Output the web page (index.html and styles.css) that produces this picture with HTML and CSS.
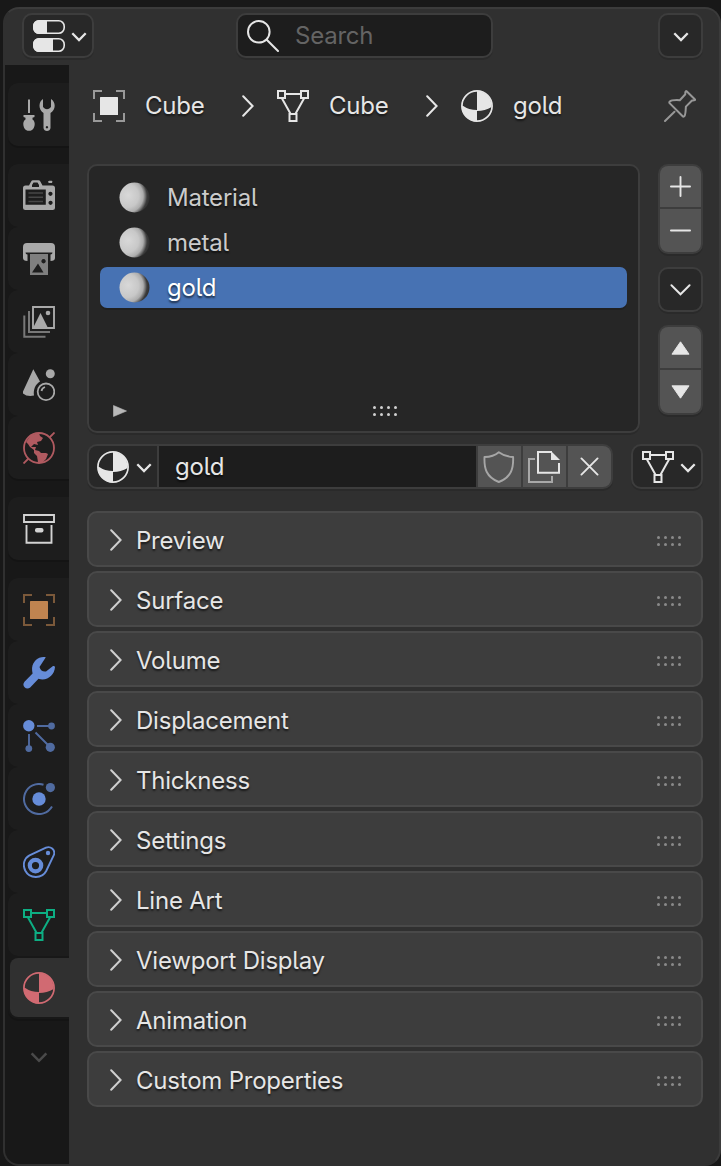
FILE: index.html
```
<!DOCTYPE html>
<html lang="en">
<head>
<meta charset="utf-8">
<title>Material Properties</title>
<link rel="stylesheet" href="styles.css">
</head>
<body>
<svg class="defs" width="0" height="0">
  <defs>
    <radialGradient id="ball-fill" cx=".2" cy=".46" fx=".3" fy=".42" r=".78">
      <stop offset="0" stop-color="#d8d8d8"/><stop offset=".5" stop-color="#c8c8c8"/><stop offset=".72" stop-color="#adadad"/><stop offset=".82" stop-color="#757575"/><stop offset=".91" stop-color="#3c3c3c"/><stop offset="1" stop-color="#323232"/>
    </radialGradient>
  </defs>
  <symbol id="properties" viewBox="0 0 32 32"><g fill="none" stroke="currentColor" stroke-width="1.6"><rect x=".8" y=".8" width="30.4" height="12.4" rx="5.500"/><rect x=".8" y="18.8" width="30.4" height="12.4" rx="5.500"/></g><path fill="currentColor" d="M6 0h8v14H6a6 6 0 0 1-6-6V6a6 6 0 0 1 6-6M6 18h14v14H6a6 6 0 0 1-6-6v-2a6 6 0 0 1 6-6"/></symbol>
  <symbol id="search" viewBox="0 0 32 32"><g fill="none" stroke="currentColor" stroke-width="2" stroke-linecap="round"><circle cx="11.800" cy="11.800" r="10.800"/><path d="m19.700 19.700 11.300 11.300"/></g></symbol>
  <symbol id="chev-down" viewBox="0 0 16 10"><path d="m1.300 1.300 6.700 6.700 6.700-6.700" fill="none" stroke="currentColor" stroke-width="2.300"/></symbol>
  <symbol id="chev-right" viewBox="0 0 12 22"><path d="m1.200 1.200 9.400 9.800-9.400 9.800" fill="none" stroke="currentColor" stroke-width="2" stroke-linecap="round"/></symbol>
  <symbol id="object" viewBox="0 0 32 32"><path d="M1 9V1h8M23 1h8v8M31 23v8h-8M9 31H1v-8" fill="none" stroke="currentColor" stroke-width="2" opacity=".58"/><rect x="7" y="7" width="18" height="18" rx=".6" fill="currentColor"/></symbol>
  <symbol id="mesh" viewBox="0 0 32 32"><path d="M1 1h7v7H1zM24 1h7v7h-7zM12.500 24h7v7h-7zM8 4h16M5 8.500l8.500 15.300M27 8.500l-8.500 15.300" fill="none" stroke="currentColor" stroke-width="2"/></symbol>
  <symbol id="material" viewBox="0 0 32 32"><circle cx="16" cy="16" r="15.100" fill="none" stroke="currentColor" stroke-width="1.700"/><path fill="currentColor" d="M16 1a15 15 0 0 1 14.600 15Q24 20 16 20ZM16 20v11.500A15.500 15.500 0 0 1 .8 15.500Q7 20 16 20ZM1.400 15.500Q8 20.100 16 20.100T30.600 15.500V17Q24 21 16 21T1.400 17Z"/></symbol>
  <symbol id="pin" viewBox="0 0 32 32"><path d="m22.600 1.200 8.200 8c.8.800-.2 1.500-2.800 1.300l-6.100 6.100c-.3 3-.1 8.700-1.900 9.900-.8.500-1.200-.1-1.800-.7L5.800 13.400c-.6-.700-.7-1.200 0-1.800 1.400-1.700 6.200-1.600 10-1.400l5.500-6c-.2-2 .4-3.700 1.300-3M1 31l9.500-9.300" fill="none" stroke="currentColor" stroke-width="2" stroke-linecap="round" stroke-linejoin="round"/></symbol>
  <symbol id="tool" viewBox="0 0 32 32"><g fill="currentColor"><path d="M5 1 6 0l1 1v13H5zM.5 16h11v2l-2 .8v1.700C13 22.500 12 29 9 31q-3 1.700-6 0C0 29-1 22.500 2.500 20.500v-1.700l-2-.8z"/><path fill-rule="evenodd" d="M20 0v8q4 4.500 8 0V0c5 3 5 11-.5 14V29c-.3 4-6.700 4-7 0V14C15 11 15.500 2.500 20 0m3.900 27a1.200 1.200 0 1 0 .1 0"/></g></symbol>
  <symbol id="render" viewBox="0 0 32 32"><path fill="currentColor" fill-rule="evenodd" d="M2.500 5.500H6L8 1.700Q8.800.3 10 .3h5.500q1.200 0 2 1.400l2 3.800h10q2.500 0 2.500 2.500v19.500q0 2.500-2.500 2.500h-27Q0 30 0 27.500V8q0-2.500 2.500-2.500M10.500 2.500 9 5v2h7V5l-1.500-2.500zM2.500 9.500v15.300h20.300V9.500zM27.400 11.700a2.100 2.100 0 1 0 .1 0m0 9a2.100 2.100 0 1 0 .1 0M26.300.7h2.500q1.500 1.100 0 2.300h-2.500q-2.600-1.100 0-2.300"/><path d="M5.500 13h14.500M5.500 17.300h14.500M5.500 21.600h14.500" stroke="currentColor" stroke-width="1.500" opacity=".3"/></symbol>
  <symbol id="output" viewBox="0 0 32 32"><path fill="currentColor" d="M4 0h24q4 0 4 4v11q0 3-4.500 3v-6.500q2 0 2-2h-27q0 2 2 2V18Q0 18 0 15V4q0-4 4-4"/><path fill="currentColor" opacity=".7" fill-rule="evenodd" d="M7 11h18v21H7zM9 29.500h11.500L15 20.500zM20.500 16a2.200 2.200 0 1 0 .1 0"/></symbol>
  <symbol id="viewlayer" viewBox="0 0 32 32"><g fill="none" stroke="currentColor"><path stroke-width="1.900" d="M10 1h21v21H10z"/><path stroke-width="2" opacity=".65" d="M6 5v21h21M1.300 9.500v21.300H22.500"/></g><path fill="currentColor" d="m10 22 7.500-15L25 22z"/><circle cx="25" cy="7" r="2.300" fill="currentColor"/></symbol>
  <symbol id="scene" viewBox="0 0 32 32"><g fill="currentColor"><path d="m10.300.3 6.700 12.200c-5 3-6.800 8.500-6 14.100Q4 28 0 24.400V22.500z"/><circle cx="27.300" cy="4.800" r="4.500"/></g><g fill="none" stroke="currentColor" stroke-width="1.800"><circle cx="23" cy="22.800" r="8.300"/><path d="M18.500 22q.5-3 3.500-4"/></g></symbol>
  <symbol id="world" viewBox="0 0 32 32"><g fill="none" stroke="currentColor" stroke-width="1.800"><circle cx="16" cy="16" r="15"/><path d="m26.500 5.500 5-5M.5 31.500l5-5"/></g><path fill="currentColor" d="m3 10 5-7 8-2 1 3 3 2-2 3-4 1 1 3-4-1-3 3h5l-1 3 4 1 2 2h5l2 1-2 5-3 3h-5l-1-6-3-3v-3l-4-3-2-3z"/></symbol>
  <symbol id="collection" viewBox="0 0 32 32"><path d="M1 2h30v7H1zM3.500 12v17.700h25V12" fill="none" stroke="currentColor" stroke-width="1.900"/><rect x="12" y="15" width="8.500" height="4.500" rx="2" fill="currentColor"/></symbol>
  <symbol id="modifier" viewBox="0 0 32 32"><path fill="currentColor" d="M22.800.3c-6.500-1.500-13 3.500-13.700 10.500q-.2 3 .5 5.700L1.500 24.700c-3.500 4.200 2 9 5.700 5.700l8.300-8.600C24 24.300 31.500 18.500 32 10q-.5-1.500-2-1L23 14.500q-5 .7-6.500-4.500z"/></symbol>
  <symbol id="particles" viewBox="0 0 32 32"><circle cx="5.800" cy="5.800" r="5.700" fill="currentColor"/><g opacity=".7" fill="currentColor" stroke="currentColor" stroke-width="1.900"><path d="M14 6h14M6 14v14M12.500 12.500 26 26"/><g stroke="none"><circle cx="28.500" cy="6" r="3.400"/><circle cx="5.800" cy="28.600" r="3.400"/><circle cx="27.300" cy="27.300" r="4.600"/></g></g></symbol>
  <symbol id="physics" viewBox="0 0 32 32"><circle cx="16" cy="16" r="6.700" fill="currentColor"/><g opacity=".7"><path d="M20.500 1.700A15 15 0 1 0 29 23.500" fill="none" stroke="currentColor" stroke-width="2"/><circle cx="27.400" cy="4.600" r="4.600" fill="currentColor"/></g></symbol>
  <symbol id="constraint" viewBox="0 0 32 32"><path d="M6.500 9.300 23 1.700c4.300-2 9.500 2 8 7L23.200 25C19 33 6.500 33 2.200 24.500-.8 18 1.500 12 6.500 9.300Z" fill="none" stroke="currentColor" stroke-width="1.900"/><circle cx="12.500" cy="19.600" r="5.700" fill="none" stroke="currentColor" stroke-width="4.200"/><circle cx="25" cy="7" r="2.200" fill="currentColor"/></symbol>
  <symbol id="ball" viewBox="0 0 32 32"><circle cx="15.500" cy="15.500" r="15" fill="url(#ball-fill)"/></symbol>
  <symbol id="shield" viewBox="0 0 32 32"><path d="M15.800 1.200Q10.500 5.800 1.500 6C1 17 3 26 15.800 31 28.600 26 30.600 17 30.100 6 22 5.800 15.800 1.200 15.800 1.200Z" fill="none" stroke="currentColor" stroke-width="1.900" stroke-linejoin="round"/></symbol>
  <symbol id="copy" viewBox="0 0 32 32"><path d="M31 12v9.800H10V1h14" fill="none" stroke="currentColor" stroke-width="2"/><path d="M23 0 32 9H23z" fill="currentColor"/><path d="M7 8H1v23h23v-6" fill="none" stroke="currentColor" stroke-width="2" opacity=".58"/></symbol>
  <symbol id="plus" viewBox="0 0 22 22"><path d="M11 1v20M1 11h20" stroke="currentColor" stroke-width="2" stroke-linecap="round"/></symbol>
  <symbol id="minus" viewBox="0 0 22 22"><path d="M1 11h20" stroke="currentColor" stroke-width="2" stroke-linecap="round"/></symbol>
  <symbol id="close" viewBox="0 0 20 20"><path d="m1.500 1.500 17 17m0-17-17 17" stroke="currentColor" stroke-width="2" stroke-linecap="round"/></symbol>
  <symbol id="open" viewBox="0 0 22 12"><path d="m1.500 1 9.500 9.500L20.500 1" fill="none" stroke="currentColor" stroke-width="2" stroke-linecap="round"/></symbol>
  <symbol id="tri" viewBox="0 0 20 14"><path d="M10 .5 19 13.500H1z" fill="currentColor" stroke="currentColor" stroke-linejoin="round"/></symbol>
  <symbol id="play" viewBox="0 0 14 12"><path d="M.5.500 13.500 6 .5 11.500z" fill="currentColor" stroke="currentColor" stroke-width=".6" stroke-linejoin="round"/></symbol>
  <symbol id="grip" viewBox="0 0 25 10"><g fill="currentColor"><circle cx="1.500" cy="1.500" r="1.500"/><circle cx="8.500" cy="1.500" r="1.500"/><circle cx="15.500" cy="1.500" r="1.500"/><circle cx="22.500" cy="1.500" r="1.500"/><circle cx="1.500" cy="8.500" r="1.500"/><circle cx="8.500" cy="8.500" r="1.500"/><circle cx="15.500" cy="8.500" r="1.500"/><circle cx="22.500" cy="8.500" r="1.500"/></g></symbol>
</svg>

<div class="editor">
  <header class="header">
    <button class="control menu"><svg class="icon"><use href="#properties"/></svg><svg class="caret"><use href="#chev-down"/></svg></button>
    <div class="control search"><svg class="icon"><use href="#search"/></svg><span>Search</span></div>
    <button class="control square"><svg class="caret"><use href="#chev-down"/></svg></button>
  </header>
  <div class="body">
    <nav class="tabs">
      <div class="group"><a class="tab"><svg class="icon"><use href="#tool"/></svg></a></div>
      <div class="group">
        <a class="tab"><svg class="icon"><use href="#render"/></svg></a>
        <a class="tab"><svg class="icon"><use href="#output"/></svg></a>
        <a class="tab"><svg class="icon"><use href="#viewlayer"/></svg></a>
        <a class="tab"><svg class="icon"><use href="#scene"/></svg></a>
        <a class="tab world"><svg class="icon"><use href="#world"/></svg></a>
      </div>
      <div class="group"><a class="tab bright"><svg class="icon"><use href="#collection"/></svg></a></div>
      <div class="group">
        <a class="tab object"><svg class="icon"><use href="#object"/></svg></a>
        <a class="tab blue"><svg class="icon"><use href="#modifier"/></svg></a>
        <a class="tab blue"><svg class="icon"><use href="#particles"/></svg></a>
        <a class="tab blue"><svg class="icon"><use href="#physics"/></svg></a>
        <a class="tab blue"><svg class="icon"><use href="#constraint"/></svg></a>
        <a class="tab data"><svg class="icon"><use href="#mesh"/></svg></a>
        <a class="tab active"><svg class="icon"><use href="#material"/></svg></a>
      </div>
      <svg class="more"><use href="#chev-down"/></svg>
    </nav>
    <main class="content">
      <div class="crumbs">
        <svg class="icon"><use href="#object"/></svg><span class="crumb first">Cube</span>
        <svg class="sep"><use href="#chev-right"/></svg>
        <svg class="icon"><use href="#mesh"/></svg><span class="crumb">Cube</span>
        <svg class="sep"><use href="#chev-right"/></svg>
        <svg class="icon"><use href="#material"/></svg><span class="crumb last">gold</span>
        <svg class="icon pin"><use href="#pin"/></svg>
      </div>
      <div class="slots">
        <div class="list">
          <div class="slot"><svg class="icon"><use href="#ball"/></svg><span>Material</span></div>
          <div class="slot"><svg class="icon"><use href="#ball"/></svg><span>metal</span></div>
          <div class="slot selected"><svg class="icon"><use href="#ball"/></svg><span>gold</span></div>
          <div class="list-foot"><svg class="play"><use href="#play"/></svg><svg class="grip"><use href="#grip"/></svg></div>
        </div>
        <div class="side">
          <div class="stack"><button><svg class="glyph"><use href="#plus"/></svg></button><button><svg class="glyph"><use href="#minus"/></svg></button></div>
          <button class="control square"><svg class="open"><use href="#open"/></svg></button>
          <div class="stack"><button><svg class="tri"><use href="#tri"/></svg></button><button><svg class="tri down"><use href="#tri"/></svg></button></div>
        </div>
      </div>
      <div class="datablock">
        <div class="id">
          <button class="browse"><svg class="icon"><use href="#material"/></svg><svg class="caret"><use href="#chev-down"/></svg></button>
          <div class="name">gold</div>
          <button class="action"><svg class="icon dim"><use href="#shield"/></svg></button>
          <button class="action"><svg class="icon"><use href="#copy"/></svg></button>
          <button class="action last-action"><svg class="close"><use href="#close"/></svg></button>
        </div>
        <button class="control menu"><svg class="icon"><use href="#mesh"/></svg><svg class="caret"><use href="#chev-down"/></svg></button>
      </div>
      <div class="panels">
        <section class="panel"><svg class="sep"><use href="#chev-right"/></svg><span>Preview</span><svg class="grip"><use href="#grip"/></svg></section>
        <section class="panel"><svg class="sep"><use href="#chev-right"/></svg><span>Surface</span><svg class="grip"><use href="#grip"/></svg></section>
        <section class="panel"><svg class="sep"><use href="#chev-right"/></svg><span>Volume</span><svg class="grip"><use href="#grip"/></svg></section>
        <section class="panel"><svg class="sep"><use href="#chev-right"/></svg><span>Displacement</span><svg class="grip"><use href="#grip"/></svg></section>
        <section class="panel"><svg class="sep"><use href="#chev-right"/></svg><span>Thickness</span><svg class="grip"><use href="#grip"/></svg></section>
        <section class="panel"><svg class="sep"><use href="#chev-right"/></svg><span>Settings</span><svg class="grip"><use href="#grip"/></svg></section>
        <section class="panel"><svg class="sep"><use href="#chev-right"/></svg><span>Line Art</span><svg class="grip"><use href="#grip"/></svg></section>
        <section class="panel"><svg class="sep"><use href="#chev-right"/></svg><span>Viewport Display</span><svg class="grip"><use href="#grip"/></svg></section>
        <section class="panel"><svg class="sep"><use href="#chev-right"/></svg><span>Animation</span><svg class="grip"><use href="#grip"/></svg></section>
        <section class="panel"><svg class="sep"><use href="#chev-right"/></svg><span>Custom Properties</span><svg class="grip"><use href="#grip"/></svg></section>
      </div>
    </main>
  </div>
</div>
</body>
</html>
```
FILE: styles.css
```
* { box-sizing: border-box; }
html { background: #181818; }
body {
  margin: 0;
  width: 721px;
  height: 1166px;
  padding: 7px 0 0 3px;
  overflow: hidden;
  background: #181818;
  color: #e6e6e6;
  font: 400 24px/30px Inter, "Liberation Sans", sans-serif;
  font-feature-settings: "cv05";
  letter-spacing: -.22px;
}
svg { display: block; flex: none; }
.defs { position: absolute; }
button {
  margin: 0; padding: 0; border: 0;
  background: none; color: inherit; font: inherit;
  display: flex; align-items: center; justify-content: center;
}
.icon { width: 32px; height: 32px; }
.caret { width: 16px; height: 10px; }
.sep { width: 12px; height: 22px; }
.grip { width: 25px; height: 10px; }

.editor {
  width: 718px;
  height: 1159px;
  border: 2px solid #3b3b3b;
  border-left-color: #303030;
  border-bottom-color: #303030;
  border-radius: 16px;
  overflow: hidden;
  background: #303030;
}
.header {
  height: 56px;
  padding: 4px 16px 0 17px;
  display: flex;
  justify-content: space-between;
  align-items: flex-start;
}
.control {
  height: 45px;
  border: 2px solid #3d3d3d;
  border-radius: 10px;
  background: #282828;
  box-shadow: 0 2px 0 rgba(0, 0, 0, .12);
}
.menu { width: 72px; gap: 6px; padding-left: 3px; }
.menu .caret, .browse .caret { margin-top: 3px; }
.square { width: 45px; }
.header .square .caret { margin-top: 3px; }
.search {
  width: 257px;
  margin-right: 23px;
  padding-left: 9px;
  display: flex;
  align-items: center;
  gap: 16px;
  background: #1d1d1d;
}
.search span { color: #646464; }

.body { height: 1099px; display: flex; }
.tabs {
  width: 64px;
  padding: 18px 0 0 3px;
  display: flex;
  flex-direction: column;
  gap: 18px;
  background: #181818;
}
.group {
  border-radius: 10px 0 0 10px;
  box-shadow: 0 2px 0 rgba(0, 0, 0, .15);
}
.tab {
  height: 63px;
  padding-left: 15px;
  display: flex;
  align-items: center;
  border-radius: 10px 0 0 10px;
  background: #1d1d1d;
  color: #a9a9a9;
}
.tab.world { color: #b05a60; }
.tab.bright { color: #d2d2d2; }
.tab.object { color: #c08450; }
.tab.blue { color: #668cd8; }
.tab.data { color: #0dae83; }
.tab.active {
  height: 59px;
  margin: 2px 0 2px 2px;
  padding-left: 13px;
  border-radius: 8px 0 0 8px;
  background: #303030;
  color: #d16a72;
}
.more { width: 18px; height: 11px; margin: 15px 0 0 22px; color: #4a4a4a; }

.content { flex: 1; padding: 25px 16px 0 18px; }
.crumbs {
  height: 32px;
  padding-left: 6px;
  display: flex;
  align-items: center;
  text-shadow: 0 2px 2px rgba(0, 0, 0, .55);
}
.crumbs .crumb { width: 117px; padding-left: 20px; }
.crumbs .sep { margin-right: 23px; }
.crumbs .last { width: 171px; }
.pin { color: #979797; }

.slots { margin-top: 42px; display: flex; justify-content: space-between; }
.list {
  width: 553px;
  height: 269px;
  padding: 9px 11px 0;
  border: 2px solid #3d3d3d;
  border-radius: 10px;
  background: #262626;
  box-shadow: 0 2px 0 rgba(0, 0, 0, .12);
}
.slot {
  height: 41px;
  margin: 2px 0 4px;
  padding-left: 19px;
  display: flex;
  align-items: center;
  gap: 16px;
  border-radius: 7px;
  color: #cbcbcb;
  text-shadow: 0 2px 2px rgba(0, 0, 0, .6);
}
.slot.selected {
  background: #4772b3;
  color: #fff;
  box-shadow: 0 2px 0 rgba(0, 0, 0, .15);
}
.list-foot { display: flex; align-items: center; margin-top: 97px; padding-left: 13px; }
.play { width: 14px; height: 12px; color: #b8b8b8; }
.list .grip { margin-left: 246px; color: #d0d0d0; }
.side { width: 45px; display: flex; flex-direction: column; gap: 13px; }
.stack {
  display: flex;
  flex-direction: column;
  height: 90px;
  gap: 2px;
  border: 2px solid #3d3d3d;
  border-radius: 10px;
  background: #3d3d3d;
  overflow: hidden;
  box-shadow: 0 2px 0 rgba(0, 0, 0, .12);
}
.stack button { height: 43px; background: #545454; }
.stack button:first-child { height: 41px; }
.glyph { width: 21px; height: 21px; }
.open { width: 21px; height: 12px; }
.tri { width: 19px; height: 14px; }
.down { transform: rotate(180deg); }

.datablock { margin-top: 11px; display: flex; justify-content: space-between; }
.id {
  width: 526px;
  height: 45px;
  display: flex;
  gap: 2px;
  border: 2px solid #3d3d3d;
  border-radius: 10px;
  overflow: hidden;
  background: #3d3d3d;
  box-shadow: 0 2px 0 rgba(0, 0, 0, .12);
}
.browse { width: 68px; gap: 7px; padding-left: 2px; background: #282828; }
.name {
  flex: 1;
  padding: 6px 0 0 16px;
  background: #1d1d1d;
  text-shadow: 0 2px 2px rgba(0, 0, 0, .6);
}
.action { width: 43px; padding-right: 1px; background: #545454; }
.last-action { padding-right: 0; }
.dim { color: #a6a6a6; }
.close { width: 19px; height: 19px; }

.panels { margin-top: 22px; display: flex; flex-direction: column; gap: 4px; }
.panel {
  height: 56px;
  padding: 4px 19px 0 21px;
  display: flex;
  align-items: center;
  border: 2px solid #494949;
  border-radius: 10px;
  background: #3d3d3d;
  text-shadow: 0 2px 2px rgba(0, 0, 0, .6);
}
.panel .sep { margin-top: -2px; color: #cfcfcf; }
.panel span { margin-left: 14px; }
.panel .grip { margin-left: auto; color: #8a8a8a; }
```
